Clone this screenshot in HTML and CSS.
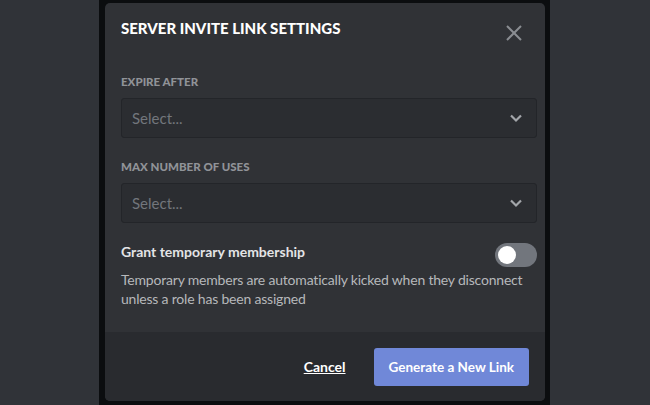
FILE: index.html
```html
<!DOCTYPE html>
<html>
<head>
<meta charset="utf-8">
<link rel="stylesheet" href="styles.css">
</head>
<body>
<div class="side"></div>
<div class="backdrop">
  <div class="modal">
    <div class="modal-body">
      <div class="header">
        <h1 class="title">Server Invite Link Settings</h1>
        <svg class="close" width="24" height="24" viewBox="0 0 24 24"><path d="M5 5L19 19M19 5L5 19" stroke="#8a8d92" stroke-width="2" fill="none"/></svg>
      </div>
      <div class="field first">
        <div class="label">Expire After</div>
        <div class="select"><span>Select...</span><svg class="chev" width="14" height="10" viewBox="0 0 14 10"><path d="M2 2.5L7 7.5L12 2.5" stroke="#a3a6aa" stroke-width="2.2" fill="none"/></svg></div>
      </div>
      <div class="field">
        <div class="label">Max Number of Uses</div>
        <div class="select"><span>Select...</span><svg class="chev" width="14" height="10" viewBox="0 0 14 10"><path d="M2 2.5L7 7.5L12 2.5" stroke="#a3a6aa" stroke-width="2.2" fill="none"/></svg></div>
      </div>
      <div class="toggle-row">
        <div class="toggle-title">Grant temporary membership</div>
        <div class="switch"><div class="knob"></div></div>
      </div>
      <p class="desc">Temporary members are automatically kicked when they disconnect unless a role has been assigned</p>
    </div>
    <div class="footer">
      <a class="cancel">Cancel</a>
      <button class="primary">Generate a New Link</button>
    </div>
  </div>
</div>
<div class="side right"></div>
</body>
</html>
```

FILE: styles.css
```css
html, body {
  margin: 0;
  padding: 0;
}
body {
  display: flex;
  height: 405px;
  width: 650px;
  background: #303338;
  font-family: "Lato", "Open Sans", sans-serif;
  overflow: hidden;
}
.side {
  width: 99px;
  flex: none;
}
.side.right {
  flex: 1;
}
.backdrop {
  width: 451px;
  flex: none;
  background: #0b0d0f;
  padding: 3px 5px 4px 6px;
  box-sizing: border-box;
}
.modal {
  height: 398px;
  background: #303236;
  border-radius: 5px;
  display: flex;
  flex-direction: column;
  overflow: hidden;
}
.modal-body {
  flex: 1;
  padding: 0 8px 0 16px;
}
.header {
  display: flex;
  justify-content: space-between;
  align-items: flex-start;
  padding-top: 15px;
}
.title {
  margin: 0;
  font-size: 15px;
  line-height: 20px;
  font-weight: 900;
  color: #ffffff;
  text-transform: uppercase;
}
.close {
  margin-top: 3px;
  margin-right: 11px;
}
.field {
  margin-top: 21px;
}
.field.first {
  margin-top: 29px;
}
.label {
  font-size: 11.5px;
  line-height: 16px;
  font-weight: 900;
  color: #909398;
  text-transform: uppercase;
  margin-bottom: 8px;
}
.select {
  height: 40px;
  box-sizing: border-box;
  width: 416px;
  background: #2b2d31;
  border: 1px solid #232529;
  border-radius: 3px;
  display: flex;
  align-items: center;
  justify-content: space-between;
  padding: 0 13px 0 10px;
  font-size: 15px;
  color: #72767c;
}
.toggle-row {
  display: flex;
  justify-content: space-between;
  align-items: flex-start;
  width: 416px;
  margin-top: 20px;
}
.toggle-title {
  font-size: 14px;
  line-height: 18px;
  font-weight: 700;
  color: #e3e4e6;
}
.switch {
  width: 42px;
  height: 24px;
  border-radius: 12px;
  background: #72767d;
  box-sizing: border-box;
  padding: 3px;
}
.knob {
  width: 18px;
  height: 18px;
  border-radius: 50%;
  background: #ffffff;
}
.desc {
  margin: 3px 0 0 0;
  font-size: 14px;
  line-height: 19px;
  color: #b6b8bb;
  width: 416px;
  letter-spacing: -0.2px;
}
.footer {
  height: 69px;
  flex: none;
  background: #292b2f;
  display: flex;
  align-items: center;
  justify-content: flex-end;
  padding: 0 16px;
  gap: 28px;
}
.cancel {
  color: #ffffff;
  font-size: 14px;
  font-weight: 700;
  text-decoration: underline;
}
.primary {
  height: 38px;
  padding: 0 15px;
  border: none;
  border-radius: 3px;
  background: #7088d8;
  color: #ffffff;
  font-family: inherit;
  font-size: 13.5px;
  font-weight: 700;
}
```
